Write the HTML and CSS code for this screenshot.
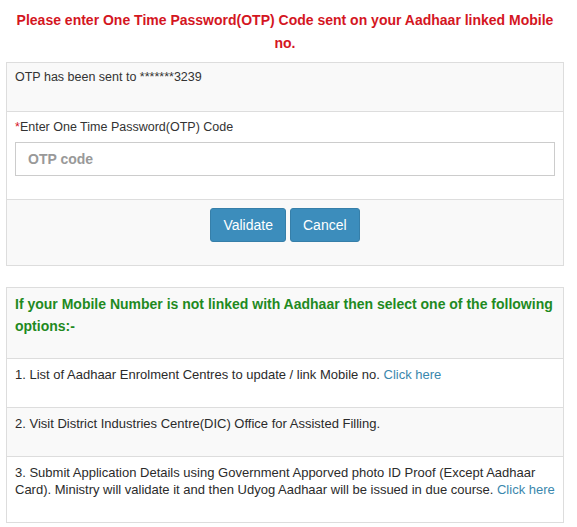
FILE: index.html
```html
<!DOCTYPE html>
<html>
<head>
<meta charset="utf-8">
<link rel="stylesheet" href="styles.css">
</head>
<body>
<div class="page">
  <h3 class="title">Please enter One Time Password(OTP) Code sent on your Aadhaar linked Mobile no.</h3>
  <div class="panel">
    <div class="row alt sent">OTP has been sent to *******3239</div>
    <div class="row field">
      <label class="label"><span class="req">*</span>Enter One Time Password(OTP) Code</label>
      <input class="input" type="text" placeholder="OTP code">
    </div>
    <div class="row alt actions">
      <button class="btn">Validate</button>
      <button class="btn">Cancel</button>
    </div>
  </div>
  <div class="panel second">
    <div class="row alt heading">If your Mobile Number is not linked with Aadhaar then select one of the following options:-</div>
    <div class="row item">1. List of Aadhaar Enrolment Centres to update / link Mobile no. <a class="link" href="#">Click here</a></div>
    <div class="row alt item">2. Visit District Industries Centre(DIC) Office for Assisted Filling.</div>
    <div class="row item">3. Submit Application Details using Government Apporved photo ID Proof (Except Aadhaar Card). Ministry will validate it and then Udyog Aadhaar will be issued in due course. <a class="link" href="#">Click here</a></div>
  </div>
</div>
</body>
</html>
```
FILE: styles.css
```css
* { box-sizing: border-box; }
html, body { margin: 0; padding: 0; background: #fff; }
body { font-family: "Liberation Sans", Arial, sans-serif; color: #333; font-size: 13px; }
.page { padding: 9px 13px 0 6px; width: 577px; }
.title {
  margin: 0 0 7px 0;
  width: 558px;
  text-align: center;
  color: #d4161f;
  font-size: 14px;
  font-weight: bold;
  line-height: 23px;
}
.panel { border: 1px solid #ddd; width: 558px; }
.second { margin-top: 21px; }
.row { background: #fff; border-top: 1px solid #ddd; }
.row:first-child { border-top: 0; }
.alt { background: #f9f9f9; }
.sent { font-size: 12.5px; line-height: 16px; padding: 6px 8px 26px 8px; }
.field { padding: 7px 8px 23px 8px; }
.label { display: block; font-size: 12.5px; line-height: 16px; margin-bottom: 7px; }
.req { color: #d4161f; }
.input {
  display: block;
  width: 540px;
  height: 34px;
  border: 1px solid #ccc;
  padding: 6px 12px;
  font-family: "Liberation Sans", Arial, sans-serif;
  font-size: 14px;
  color: #555;
  margin: 0;
  background: #fff;
}
.input::placeholder { color: #999; font-weight: bold; }
.actions { display: flex; justify-content: center; gap: 4px; padding: 8px 8px 23px 8px; }
.btn {
  background: #3c8dbc;
  border: 1px solid #367fa9;
  color: #fff;
  font-family: "Liberation Sans", Arial, sans-serif;
  font-size: 14px;
  height: 34px;
  padding: 0 12px;
  border-radius: 3px;
}
.heading { color: #1f8a1f; font-weight: bold; font-size: 14px; line-height: 22px; padding: 5px 8px 21px 8px; }
.item { font-size: 13px; line-height: 17px; padding: 7px 8px 24px 8px; color: #2b2b2b; }
.link { color: #3a87ad; text-decoration: none; }
```
